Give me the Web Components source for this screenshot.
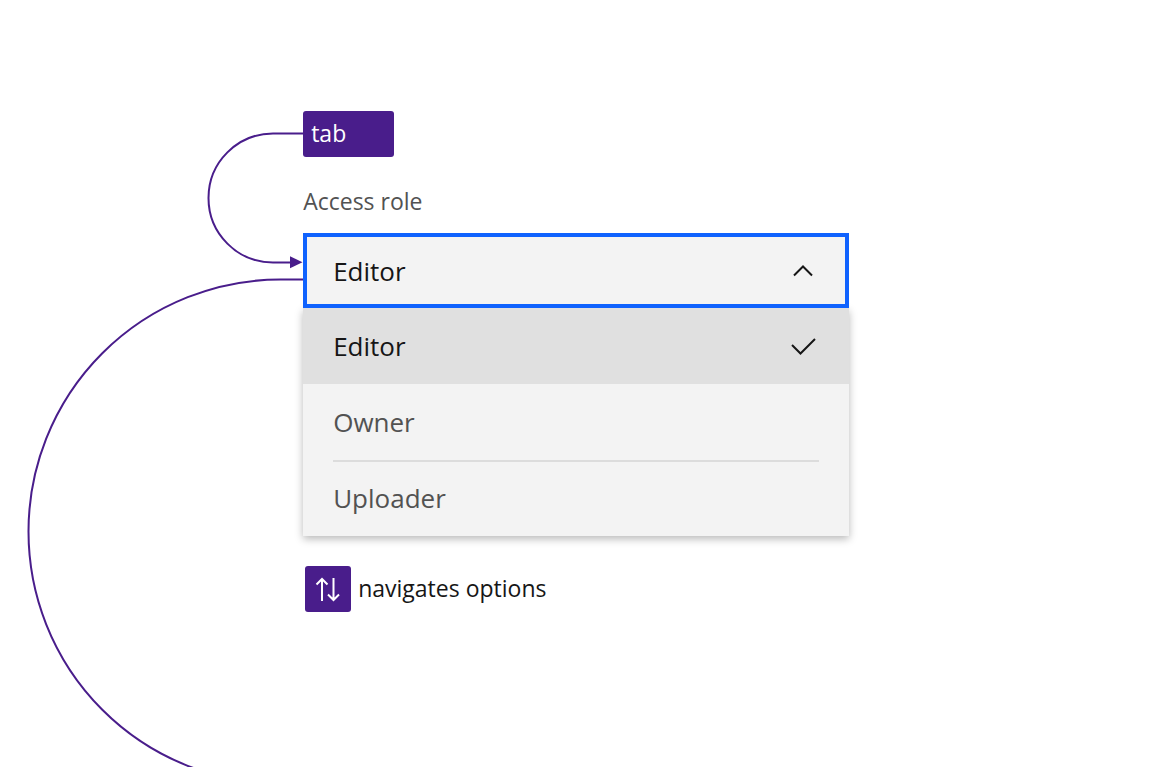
<!DOCTYPE html>
<html lang="en">
<head>
<meta charset="utf-8">
<meta name="viewport" content="width=device-width, initial-scale=1">
<title>Dropdown keyboard navigation</title>
<style>
  body {
    margin: 0;
    background: #fff;
    color: #161616;
    font-family: "Open Sans", "Noto Sans", sans-serif;
  }
</style>
</head>
<body>
<keyboard-diagram>
  <focus-path slot="path"></focus-path>
  <key-cap>tab</key-cap>
  <role-dropdown>
    <span slot="label">Access role</span>
  </role-dropdown>
  <key-hint>navigates options</key-hint>
</keyboard-diagram>

<script>
  const define = (name, html, setup) =>
    customElements.define(name, class extends HTMLElement {
      constructor() {
        super();
        this.attachShadow({ mode: "open" }).innerHTML = html;
        if (setup) setup(this.shadowRoot);
      }
    });

  // Page frame: focus path on the left, the annotated field in the middle
  define("keyboard-diagram", `
    <style>
      :host { display: block; }
      main {
        display: grid;
        grid-template-columns: 5fr 9fr 5fr;
        box-sizing: border-box;
        min-height: 100vh;
        padding-top: 111px;
        overflow: hidden;
      }
      .field { display: flex; flex-direction: column; align-items: stretch; gap: 30px; min-width: 0; }
    </style>
    <main>
      <slot name="path"></slot>
      <div class="field"><slot></slot></div>
    </main>`);

  // Curves that show how focus enters and leaves the field
  define("focus-path", `
    <style>
      :host { display: flex; justify-content: flex-end; min-width: 0; height: 0; }
      svg { display: block; flex: none; overflow: visible; }
      .line { fill: none; stroke: #491d8b; stroke-width: 2; }
      .head { fill: #491d8b; }
    </style>
    <svg width="303" height="656" aria-hidden="true">
      <path class="line" d="M303 22.5H273A64.5 64.5 0 0 0 273 151.5H291"/>
      <path class="head" d="M290 145.3L302.5 151.3L290 157.3Z"/>
      <path class="line" d="M303 168.5H280.5A252 252 0 0 0 280.5 672.5H303"/>
    </svg>`);

  define("key-cap", `
    <style>
      :host { display: block; }
      kbd {
        display: block;
        box-sizing: border-box;
        width: 91px;
        height: 46px;
        padding-left: 8px;
        border-radius: 3px;
        background: #491d8b;
        color: #fff;
        font: 23px/44px "Open Sans", "Noto Sans", sans-serif;
      }
    </style>
    <kbd><slot></slot></kbd>`);

  define("role-dropdown", `
    <style>
      :host { display: block; }
      label { display: block; margin-bottom: 18px; font-size: 23px; line-height: 28px; color: #525252; }
      .control { position: relative; z-index: 1; }
      select {
        display: block;
        appearance: none;
        box-sizing: border-box;
        width: 100%;
        height: 75px;
        margin: 0;
        padding: 0 58px 0 26px;
        border: 4px solid #0f62fe;
        border-radius: 0;
        outline: none;
        background: #f3f3f3;
        color: #161616;
        font: inherit;
        font-size: 26px;
      }
      svg { width: 32px; height: 32px; flex: none; fill: none; stroke: #161616; stroke-width: 2; }
      .control svg { position: absolute; right: 30px; top: 22px; pointer-events: none; }
      ul {
        margin: 0;
        padding: 0;
        list-style: none;
        background: #f3f3f3;
        box-shadow: 0 3px 8px rgba(0, 0, 0, .28);
      }
      ul[hidden] { display: none; }
      li { padding: 0 30px; color: #525252; font-size: 26px; cursor: pointer; }
      .row {
        display: flex;
        align-items: center;
        justify-content: space-between;
        box-sizing: border-box;
        height: 76px;
        border-top: 2px solid transparent;
        border-bottom: 2px solid transparent;
      }
      li + li:not([aria-selected="true"]) .row { border-top-color: #dcdcdc; }
      li[aria-selected="true"] { background: #e0e0e0; color: #161616; }
      li[aria-selected="true"] + li .row { border-top-color: transparent !important; }
      li:not([aria-selected="true"]) svg { display: none; }
    </style>
    <label for="role"><slot name="label"></slot></label>
    <div class="control">
      <select id="role">
        <option>Editor</option>
        <option>Owner</option>
        <option>Uploader</option>
      </select>
      <svg viewBox="0 0 32 32" aria-hidden="true"><path d="M7 20.5L16 11.5L25 20.5"/></svg>
    </div>
    <ul role="listbox" aria-label="Access role options"></ul>`,
    (root) => {
      const select = root.querySelector("select");
      const list = root.querySelector("ul");
      const mark = () => [...list.children].forEach((li, i) =>
        li.setAttribute("aria-selected", String(i === select.selectedIndex)));
      [...select.options].forEach((option, i) => {
        const li = document.createElement("li");
        li.setAttribute("role", "option");
        li.innerHTML = `<div class="row"><span></span>
          <svg viewBox="0 0 32 32" aria-hidden="true"><path d="M5 15L13.5 23.5L28 9"/></svg></div>`;
        li.querySelector("span").textContent = option.text;
        li.addEventListener("click", () => { select.selectedIndex = i; mark(); });
        list.append(li);
      });
      mark();
      select.addEventListener("change", mark);
      select.addEventListener("mousedown", (event) => {
        event.preventDefault();
        select.focus();
        list.hidden = !list.hidden;
      });
    });

  define("key-hint", `
    <style>
      :host { display: flex; align-items: flex-start; gap: 7px; padding-left: 2px; font-size: 23px; line-height: 44px; }
      kbd { display: block; flex: none; width: 46px; height: 46px; border-radius: 3px; background: #491d8b; }
      svg { display: block; width: 46px; height: 46px; fill: none; stroke: #fff; stroke-width: 2; }
    </style>
    <kbd aria-label="Up and down arrows">
      <svg viewBox="0 0 46 46" aria-hidden="true">
        <path d="M17 35V13M11.5 18.5L17 13L22.5 18.5M28.5 12V34M23 28.5L28.5 34L34 28.5"/>
      </svg>
    </kbd>
    <span><slot></slot></span>`);
</script>
</body>
</html>
